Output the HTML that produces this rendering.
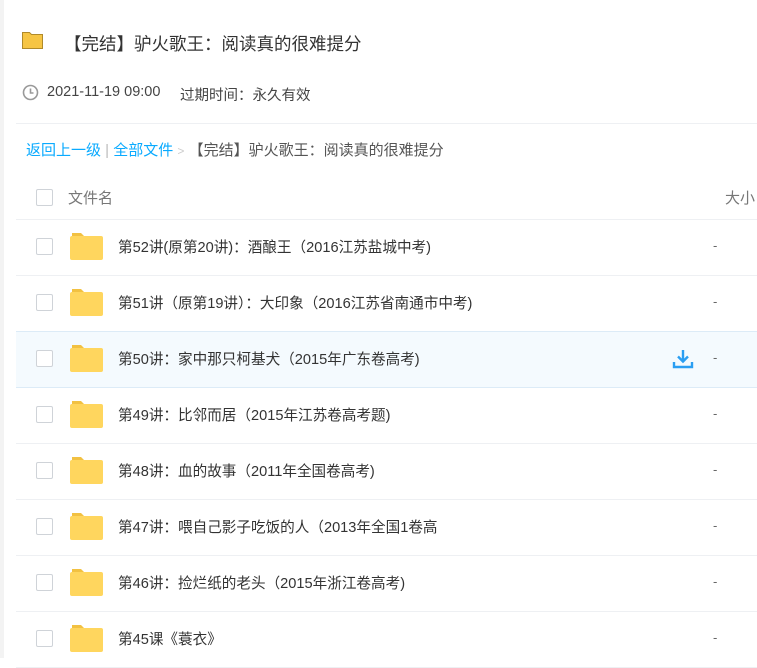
<!DOCTYPE html><html><head><meta charset="utf-8"><style>
body{margin:0;width:757px;height:658px;overflow:hidden;background:#fff;font-family:"Liberation Sans","Noto Sans CJK SC",sans-serif;position:relative}
.strip{position:absolute;left:0;top:0;width:4px;height:658px;background:#f3f3f3}
.t{position:absolute;white-space:nowrap}
.cb{position:absolute;left:36px;width:15px;height:15px;border:1px solid #cfd3d8;border-radius:2px;background:#fff}
.row{position:absolute;left:16px;width:741px;height:55px;border-bottom:1px solid #eef0f3}
.fold{position:absolute;left:70px;width:33px;height:27px}
.name{position:absolute;left:118px;font-size:14.6px;color:#333}
.dash{position:absolute;left:713px;font-size:13px;color:#666}
</style></head><body>
<div class="strip"></div>
<svg style="position:absolute;left:22px;top:31px" width="21" height="18"><path d="M0.5 1.5h7l2 2h11v14h-20z" fill="#f6c544" stroke="#b08a2a"/></svg>
<div class="t" style="left:64px;top:31px;font-size:17.5px;color:#333">【完结】驴火歌王：阅读真的很难提分</div>
<svg style="position:absolute;left:22px;top:84px" width="17" height="17"><circle cx="8.5" cy="8.5" r="7" fill="none" stroke="#999" stroke-width="1.6"/><path d="M8.5 4.5v4.5h3" fill="none" stroke="#999" stroke-width="1.6"/></svg>
<div class="t" style="left:47px;top:84px;font-size:14.5px;color:#444">2021-11-19 09:00</div>
<div class="t" style="left:180px;top:84px;font-size:14.5px;color:#444">过期时间：永久有效</div>
<div style="position:absolute;left:16px;top:123px;width:741px;height:1px;background:#eef0f3"></div>
<div class="t" style="left:26px;top:139px;font-size:15px;color:#09aaff">返回上一级 <span style="color:#bbb">|</span> 全部文件 <span style="color:#ccc;font-size:12px">&gt;</span> <span style="color:#555">【完结】驴火歌王：阅读真的很难提分</span></div>
<div class="cb" style="top:189px"></div>
<div class="t" style="left:68px;top:187px;font-size:15px;color:#777">文件名</div>
<div class="t" style="left:725px;top:187px;font-size:15px;color:#777">大小</div>
<div style="position:absolute;left:16px;top:219px;width:741px;height:1px;background:#eef0f3"></div>
<div class="row" style="top:220px"></div><div class="row" style="top:276px"></div>
<div class="row" style="top:331px;background:#f4fafe;border-top:1px solid #dcebf7;border-bottom:1px solid #dcebf7"></div>
<div class="row" style="top:388px"></div><div class="row" style="top:444px"></div><div class="row" style="top:500px"></div><div class="row" style="top:556px"></div><div class="row" style="top:612px"></div>
<div id="rows"></div>
<svg style="position:absolute;left:672px;top:348px" width="22" height="22"><path d="M11 2v11M6 8.5l5 5 5-5" fill="none" stroke="#2a9ef2" stroke-width="2.4"/><path d="M2 14v5h18v-5" fill="none" stroke="#2a9ef2" stroke-width="2.4"/></svg>
<script>
var n=["第52讲(原第20讲)：酒酿王（2016江苏盐城中考)","第51讲（原第19讲）：大印象（2016江苏省南通市中考)","第50讲：家中那只柯基犬（2015年广东卷高考)","第49讲：比邻而居（2015年江苏卷高考题)","第48讲：血的故事（2011年全国卷高考)","第47讲：喂自己影子吃饭的人（2013年全国1卷高","第46讲：捡烂纸的老头（2015年浙江卷高考)","第45课《蓑衣》"];
var h="";n.forEach(function(s,i){var c=246+56*i;
h+='<div class="cb" style="top:'+(c-8)+'px"></div>';
h+='<svg class="fold" style="top:'+(c-13)+'px" viewBox="0 0 33 27"><path d="M2 0h9l3 3h-12z" fill="#f2c142"/><rect x="0" y="3" width="33" height="24" rx="2" fill="#ffd65e"/></svg>';
h+='<div class="name t" style="top:'+(c-10)+'px">'+s+'</div><div class="dash t" style="top:'+(c-8)+'px">-</div>';});
document.getElementById("rows").innerHTML=h;
</script>
</body></html>
